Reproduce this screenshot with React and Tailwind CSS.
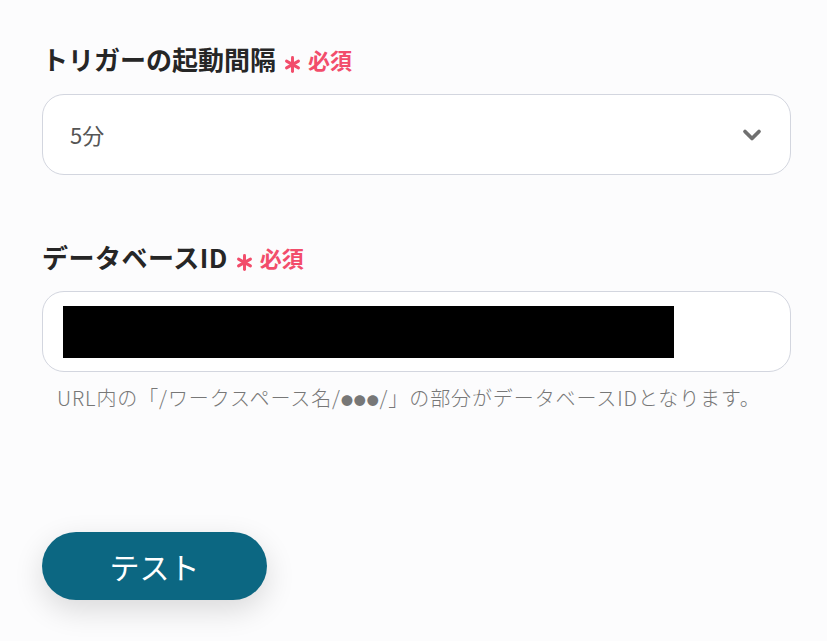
import { ChevronDown } from 'lucide-react'

const font = { fontFamily: '"Noto Sans CJK JP", "Noto Sans", sans-serif' }

function Required() {
  return (
    <span className="ml-[8px] inline-flex items-center gap-[7px] text-[#f24d6b]">
      <svg width="17" height="17" viewBox="0 0 16 16" className="mt-[10px]" fill="none" stroke="#f24d6b" strokeWidth="2.8" strokeLinecap="round">
        <line x1="8" y1="1.5" x2="8" y2="14.5" />
        <line x1="2.4" y1="4.8" x2="13.6" y2="11.2" />
        <line x1="13.6" y1="4.8" x2="2.4" y2="11.2" />
      </svg>
      <span className="text-[22px] font-bold">必須</span>
    </span>
  )
}

export default function App() {
  return (
    <div className="min-h-[641px] w-full bg-[#fcfcfd]" style={font}>
      <div className="pl-[42px] pr-[36px] pt-[39px]">
        {/* Trigger interval */}
        <div className="flex items-center">
          <span className="text-[26px] font-bold text-[#262626] leading-[40px]">トリガーの起動間隔</span>
          <Required />
        </div>
        <div className="mt-[15px] flex h-[81px] items-center justify-between rounded-[22px] border border-[#d3d6df] bg-white pl-[27px] pr-[24px]">
          <span className="text-[22px] text-[#555]">5分</span>
          <ChevronDown size={28} strokeWidth={3.2} className="text-[#707070]" />
        </div>

        {/* Database ID */}
        <div className="mt-[62px] flex items-center">
          <span className="text-[26px] font-bold text-[#262626] leading-[40px] tracking-[0.5px]">データベースID</span>
          <Required />
        </div>
        <div className="mt-[14px] flex h-[81px] items-center rounded-[22px] border border-[#d3d6df] bg-white pl-[20px]">
          <div className="h-[52px] w-[611px] bg-black" />
        </div>
        <p className="mt-[12px] pl-[15px] text-[20px] leading-[28px] tracking-[0.9px] text-[#777] font-light">
          URL内の「/ワークスペース名/<span className="text-[12px]">●●●</span>/」の部分がデータベースIDとなります。
        </p>

        <button className="mt-[117px] flex h-[68px] w-[225px] items-center justify-center rounded-full bg-[#0c6782] text-[30px] text-white shadow-[0_10px_30px_rgba(0,0,0,0.14)]">
          テスト
        </button>
      </div>
    </div>
  )
}
